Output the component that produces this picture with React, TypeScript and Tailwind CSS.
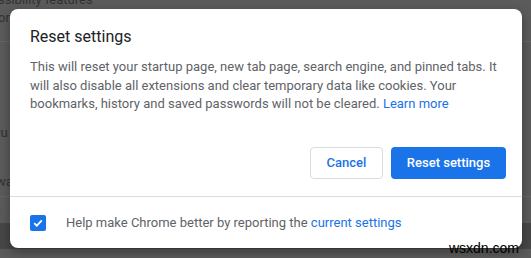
import React from "react";

export default function App() {
  return (
    <div
      className="relative w-[531px] h-[258px] overflow-hidden bg-[#5b5b5b]"
      style={{ fontFamily: "Roboto, 'Liberation Sans', sans-serif" }}
    >
      {/* dimmed page behind the overlay */}
      <div className="flex flex-col h-full -mt-[9px] text-[13px] leading-[18px] text-[#2a2a2a]">
        <div className="pl-0 -ml-[2px] opacity-80">ssibility features</div>
        <div className="h-[33px] -ml-[2px] border-b border-[#6a6a6a] opacity-80">or</div>
        <div className="h-[82px]" />
        <div className="h-[49px] -ml-[4px] opacity-80">ru</div>
        <div className="h-[24px] -ml-[4px] border-b border-[#6a6a6a] opacity-80">wa</div>
        <div className="h-[26px] pt-[7px] -ml-[4px] opacity-80">r</div>
        <div className="flex-1 bg-[#474747]" />
      </div>

      {/* dialog */}
      <div className="absolute left-[10px] top-[9px] w-[512px] h-[239px] rounded-lg bg-white shadow-[0_4px_12px_rgba(0,0,0,0.35)] flex flex-col">
        <div className="px-5 pt-4 text-[16px] leading-6 text-[#202124]">Reset settings</div>
        <div className="px-5 mt-[9px] text-[13px] leading-[18.5px] text-[#5f6368]">
          This will reset your startup page, new tab page, search engine, and pinned tabs. It will also disable all extensions and clear temporary data like cookies. Your bookmarks, history and saved passwords will not be cleared.{" "}
          <span className="text-[#1a73e8]">Learn more</span>
        </div>
        <div className="flex justify-end gap-2 px-4 mt-auto pb-[17px]">
          <button className="h-8 w-[73px] rounded border border-[#dadce0] bg-white text-[13px] font-medium text-[#1a73e8]">
            Cancel
          </button>
          <button className="h-8 w-[115px] rounded bg-[#1a73e8] text-[13px] font-medium text-white">
            Reset settings
          </button>
        </div>
        <div className="h-[52px] border-t border-[#dadce0] flex items-center px-5 gap-5">
          <div className="w-4 h-4 rounded-[2px] bg-[#1a73e8] flex items-center justify-center">
            <svg width="12" height="12" viewBox="0 0 12 12">
              <path d="M2.2 6.2 L4.8 8.7 L9.8 3.4" fill="none" stroke="white" strokeWidth="1.8" />
            </svg>
          </div>
          <div className="text-[13px] text-[#5f6368]">
            Help make Chrome better by reporting the <span className="text-[#1a73e8]">current settings</span>
          </div>
        </div>
      </div>

      <div
        className="absolute right-[12px] bottom-[2px] text-[14px] leading-4 text-black"
        style={{ fontFamily: "'Liberation Sans', Arial, sans-serif" }}
      >
        wsxdn.com
      </div>
    </div>
  );
}
